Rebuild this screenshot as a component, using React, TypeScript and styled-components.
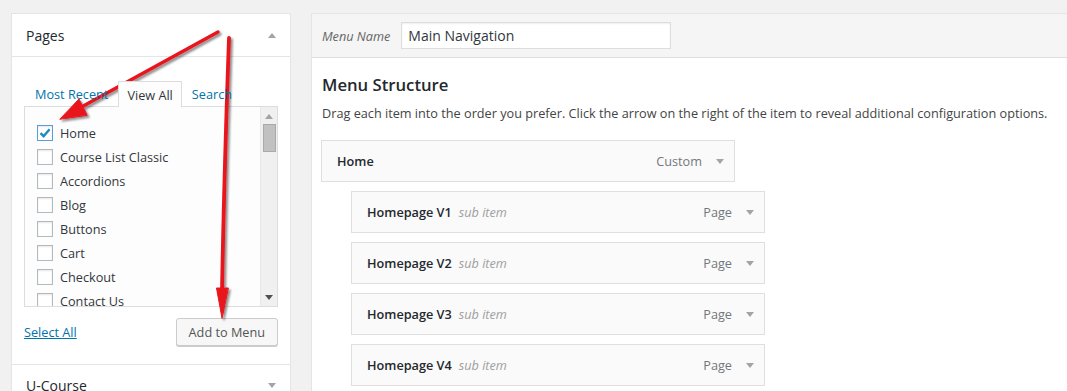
import React from "react";
import styled, { createGlobalStyle } from "styled-components";

const GlobalStyle = createGlobalStyle`
  html, body { margin: 0; padding: 0; }
  body {
    background: #f1f1f1;
    font-family: "Open Sans", "Liberation Sans", sans-serif;
    font-size: 12.7px;
    color: #444;
    overflow: hidden;
  }
  * { box-sizing: border-box; }
`;

const Page = styled.div`
  position: relative;
  display: flex;
  align-items: flex-start;
  gap: 20px;
  padding: 13px 0 0 11px;
  width: 1067px;
  height: 391px;
  overflow: hidden;
`;

const Sidebar = styled.div`
  width: 280px;
  flex: none;
  background: #fff;
  border: 1px solid #e5e5e5;
  box-shadow: 0 1px 1px rgba(0, 0, 0, 0.04);
`;

const SectionTitle = styled.div<{ $top?: boolean }>`
  height: 43px;
  display: flex;
  align-items: center;
  justify-content: space-between;
  padding: 0 14px 0 14px;
  background: #fff;
  border-bottom: 1px solid #e5e5e5;
  ${(p) => (p.$top ? "border-top: 1px solid #e5e5e5;" : "")}
  h3 {
    margin: 0;
    font-size: 14px;
    font-weight: 400;
    color: #23282d;
  }
`;

const Caret = styled.span<{ $up?: boolean; $w?: number; $color?: string }>`
  display: inline-block;
  width: 0;
  height: 0;
  border-left: ${(p) => (p.$w ?? 8) / 2}px solid transparent;
  border-right: ${(p) => (p.$w ?? 8) / 2}px solid transparent;
  ${(p) =>
    p.$up
      ? `border-bottom: 5px solid ${p.$color ?? "#a0a5aa"};`
      : `border-top: 5px solid ${p.$color ?? "#a0a5aa"};`}
`;

const SectionBody = styled.div`
  padding: 24px 12px 18px 12px;
  background: #fff;
`;

const Tabs = styled.div`
  display: flex;
  gap: 1px;
  padding-left: 2px;
  position: relative;
  z-index: 1;
`;

const Tab = styled.span<{ $active?: boolean }>`
  height: 25px;
  display: flex;
  align-items: center;
  padding: 0 8px;
  border: 1px solid transparent;
  border-bottom: none;
  color: #0073aa;
  ${(p) =>
    p.$active
      ? `border-color: #ddd; background: #fdfdfd; color: #32373c; margin-bottom: -1px; height: 26px;`
      : ""}
`;

const ListBox = styled.div`
  height: 201px;
  border: 1px solid #ddd;
  background: #fdfdfd;
  display: flex;
  overflow: hidden;
`;

const List = styled.ul`
  list-style: none;
  margin: 0;
  padding: 14px 0 0 12px;
  flex: 1;
`;

const Row = styled.li`
  height: 24px;
  display: flex;
  align-items: center;
  color: #32373c;
`;

const Check = styled.span<{ $checked?: boolean }>`
  width: 16px;
  height: 16px;
  flex: none;
  margin-right: 7px;
  border: 1px solid ${(p) => (p.$checked ? "#5b9dd9" : "#b4b9be")};
  background: #fff;
  box-shadow: inset 0 1px 2px rgba(0, 0, 0, 0.1);
  display: flex;
  align-items: center;
  justify-content: center;
`;

const Scrollbar = styled.div`
  width: 17px;
  flex: none;
  background: #f0f0f0;
  border-left: 1px solid #e8e8e8;
  display: flex;
  flex-direction: column;
  align-items: center;
  padding: 7px 0 6px;
`;

const Thumb = styled.div`
  width: 13px;
  height: 28px;
  margin-top: 5px;
  background: #c1c1c1;
  border: 1px solid #a9a9a9;
`;

const Spacer = styled.div`
  flex: 1;
`;

const Actions = styled.div`
  display: flex;
  justify-content: space-between;
  align-items: center;
  margin-top: 11px;
`;

const Link = styled.a`
  color: #0073aa;
  text-decoration: underline;
`;

const Button = styled.button`
  height: 28px;
  padding: 0 12px;
  font-family: inherit;
  font-size: 12.7px;
  color: #555;
  background: #f7f7f7;
  border: 1px solid #ccc;
  border-radius: 3px;
  box-shadow: 0 1px 0 #ccc;
`;

const Main = styled.div`
  flex: 1;
  margin-right: -20px;
  background: #fff;
  border: 1px solid #e5e5e5;
  min-height: 400px;
`;

const MenuHeader = styled.div`
  height: 44px;
  background: #f5f5f5;
  border-bottom: 1px solid #dedede;
  display: flex;
  align-items: center;
  padding: 0 10px;
`;

const Label = styled.label`
  font-style: italic;
  color: #666;
  margin-right: 11px;
`;

const NameInput = styled.div`
  width: 270px;
  height: 27px;
  border: 1px solid #ddd;
  background: #fff;
  box-shadow: inset 0 1px 2px rgba(0, 0, 0, 0.07);
  display: flex;
  align-items: center;
  padding: 0 6px;
  font-size: 14px;
  color: #32373c;
`;

const MenuBody = styled.div`
  padding: 0 10px 0 9px;
`;

const Title = styled.h3`
  margin: 15px 0 0 1px;
  font-size: 16.7px;
  font-weight: 600;
  color: #23282d;
  line-height: 23px;
`;

const Desc = styled.p`
  margin: 7px 0 17px 1px;
  line-height: 20px;
  color: #444;
`;

const Item = styled.div<{ $depth: number }>`
  width: 414px;
  height: 42px;
  margin: 0 0 9px ${(p) => p.$depth * 30}px;
  background: #fafafa;
  border: 1px solid #dfdfdf;
  display: flex;
  align-items: center;
  padding: 0 10px 0 15px;
`;

const ItemTitle = styled.span`
  font-weight: 600;
  color: #23282d;
`;

const SubNote = styled.span`
  font-style: italic;
  color: #a0a0a0;
  margin-left: 7px;
`;

const ItemType = styled.span`
  margin-left: auto;
  margin-right: 14px;
  color: #72777c;
`;

const Overlay = styled.svg`
  position: absolute;
  top: 0;
  left: 0;
  pointer-events: none;
`;

const pages = [
  "Home",
  "Course List Classic",
  "Accordions",
  "Blog",
  "Buttons",
  "Cart",
  "Checkout",
  "Contact Us",
  "Courses",
];

const items = [
  { title: "Home", type: "Custom", depth: 0 },
  { title: "Homepage V1", type: "Page", depth: 1 },
  { title: "Homepage V2", type: "Page", depth: 1 },
  { title: "Homepage V3", type: "Page", depth: 1 },
  { title: "Homepage V4", type: "Page", depth: 1 },
];

export default function App() {
  return (
    <>
      <GlobalStyle />
      <Page>
        <Sidebar>
          <SectionTitle>
            <h3>Pages</h3>
            <Caret $up $w={8} $color="#a0a5aa" />
          </SectionTitle>
          <SectionBody>
            <Tabs>
              <Tab>Most Recent</Tab>
              <Tab $active>View All</Tab>
              <Tab>Search</Tab>
            </Tabs>
            <ListBox>
              <List>
                {pages.map((p, i) => (
                  <Row key={p}>
                    <Check $checked={i === 0}>
                      {i === 0 && (
                        <svg width="14" height="14" viewBox="0 0 14 14">
                          <path
                            d="M2.5 7.2 L5.6 10.2 L11.6 3.2"
                            fill="none"
                            stroke="#1e8cbe"
                            strokeWidth="2.4"
                          />
                        </svg>
                      )}
                    </Check>
                    {p}
                  </Row>
                ))}
              </List>
              <Scrollbar>
                <Caret $up $w={8} $color="#a3a3a3" />
                <Thumb />
                <Spacer />
                <Caret $w={8} $color="#505050" />
              </Scrollbar>
            </ListBox>
            <Actions>
              <Link>Select All</Link>
              <Button>Add to Menu</Button>
            </Actions>
          </SectionBody>
          <SectionTitle $top>
            <h3>U-Course</h3>
            <Caret $w={8} $color="#a0a5aa" />
          </SectionTitle>
        </Sidebar>
        <Main>
          <MenuHeader>
            <Label>Menu Name</Label>
            <NameInput>Main Navigation</NameInput>
          </MenuHeader>
          <MenuBody>
            <Title>Menu Structure</Title>
            <Desc>
              Drag each item into the order you prefer. Click the arrow on the
              right of the item to reveal additional configuration options.
            </Desc>
            {items.map((it) => (
              <Item key={it.title} $depth={it.depth}>
                <ItemTitle>{it.title}</ItemTitle>
                {it.depth > 0 && <SubNote>sub item</SubNote>}
                <ItemType>{it.type}</ItemType>
                <Caret $w={8} $color="#a0a5aa" />
              </Item>
            ))}
          </MenuBody>
        </Main>
        <Overlay width="1067" height="391" viewBox="0 0 1067 391">
          <defs>
            <filter id="sh" x="-20%" y="-20%" width="140%" height="140%">
              <feDropShadow dx="2" dy="2" stdDeviation="1.3" floodColor="#000" floodOpacity="0.45" />
            </filter>
          </defs>
          <g filter="url(#sh)" fill="#e8141b" stroke="#e8141b" strokeLinecap="round">
            <line x1="218" y1="32" x2="76" y2="110" strokeWidth="3.5" />
            <polygon points="60,119 79,99 87,115" strokeWidth="1" strokeLinejoin="round" />
            <path d="M229 38 Q 224 180 222 292" fill="none" strokeWidth="3.8" />
            <polygon points="222,318 216.5,288 228,288" strokeWidth="1" strokeLinejoin="round" />
          </g>
        </Overlay>
      </Page>
    </>
  );
}
